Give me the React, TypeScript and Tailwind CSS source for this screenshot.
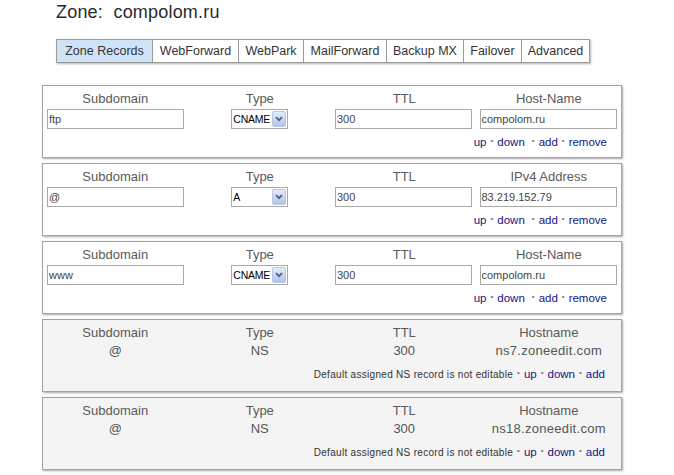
import React from "react";

type EditRow = {
  sub: string;
  type: string;
  ttl: string;
  label: string;
  value: string;
};

type NsRow = {
  host: string;
};

const tabs: { name: string; w: string }[] = [
  { name: "Zone Records", w: "w-[95px]" },
  { name: "WebForward", w: "w-[86px]" },
  { name: "WebPark", w: "w-[65px]" },
  { name: "MailForward", w: "w-[83px]" },
  { name: "Backup MX", w: "w-[77px]" },
  { name: "Failover", w: "w-[58px]" },
  { name: "Advanced", w: "w-[68px]" },
];

const editRows: EditRow[] = [
  { sub: "ftp", type: "CNAME", ttl: "300", label: "Host-Name", value: "compolom.ru" },
  { sub: "@", type: "A", ttl: "300", label: "IPv4 Address", value: "83.219.152.79" },
  { sub: "www", type: "CNAME", ttl: "300", label: "Host-Name", value: "compolom.ru" },
];

const nsRows: NsRow[] = [{ host: "ns7.zoneedit.com" }, { host: "ns18.zoneedit.com" }];

function Dot() {
  return <span className="mx-[4px] text-[#777] text-[8px] relative top-[-1px]">•</span>;
}

function Field({ value }: { value: string }) {
  return (
    <div className="w-[137px] h-[20px] border border-[#a9a9a9] bg-white flex items-center pl-[1px] text-[11px] text-[#444]">
      {value}
    </div>
  );
}

function TypeSelect({ value }: { value: string }) {
  return (
    <div className="w-[57px] h-[20px] border border-[#a9a9a9] bg-white flex items-center">
      <span className="flex-1 pl-[1px] text-[10.5px] tracking-[-0.2px] text-black whitespace-nowrap">{value}</span>
      <span className="w-[14px] h-[16px] mr-[1px] shrink-0 rounded-[2px] border border-[#b7c5e6] bg-gradient-to-b from-[#e4ebfa] to-[#b4c3e6] flex items-center justify-center">
        <svg width="8" height="6" viewBox="0 0 8 6">
          <path d="M1 1.2 L4 4.2 L7 1.2" fill="none" stroke="#4c5f86" strokeWidth="1.8" />
        </svg>
      </span>
    </div>
  );
}

function Header({ label }: { label: string }) {
  return <div className="h-[16px] leading-[16px] text-center text-[13px] text-[#5a5a5a]">{label}</div>;
}

function EditPanel({ row }: { row: EditRow }) {
  return (
    <div className="h-[73px] border border-[#a3a3a3] bg-white shadow-[1px_1px_2px_rgba(0,0,0,0.35)] pt-[5px]">
      <div className="grid grid-cols-4">
        <Header label="Subdomain" />
        <Header label="Type" />
        <Header label="TTL" />
        <Header label={row.label} />
      </div>
      <div className="grid grid-cols-4 mt-[2px]">
        <div className="pl-[4px]">
          <Field value={row.sub} />
        </div>
        <div className="flex justify-center">
          <TypeSelect value={row.type} />
        </div>
        <div className="pl-[3px]">
          <Field value={row.ttl} />
        </div>
        <div className="pl-[3px]">
          <Field value={row.value} />
        </div>
      </div>
      <div className="flex justify-end pr-[14px] mt-[6px] h-[14px] items-center text-[11.5px] text-[#141486]">
        <span>up</span>
        <Dot />
        <span>down</span>
        <span className="w-[3px]" />
        <Dot />
        <span>add</span>
        <Dot />
        <span>remove</span>
      </div>
    </div>
  );
}

function NsPanel({ row }: { row: NsRow }) {
  return (
    <div className="h-[73px] border border-[#a3a3a3] bg-[#f4f4f4] shadow-[1px_1px_2px_rgba(0,0,0,0.35)] pt-[5px]">
      <div className="grid grid-cols-4">
        <Header label="Subdomain" />
        <Header label="Type" />
        <Header label="TTL" />
        <Header label="Hostname" />
      </div>
      <div className="grid grid-cols-4 mt-[2px] text-[13px] text-[#555] text-center leading-[16px]">
        <div>@</div>
        <div>NS</div>
        <div>300</div>
        <div className="tracking-[0.3px]">{row.host}</div>
      </div>
      <div className="flex justify-end pr-[16px] mt-[8px] h-[14px] items-center text-[11.5px] text-[#141486]">
        <span className="text-[10px] text-[#333] tracking-[0.3px]">Default assigned NS record is not editable</span>
        <Dot />
        <span>up</span>
        <Dot />
        <span>down</span>
        <Dot />
        <span>add</span>
      </div>
    </div>
  );
}

export default function App() {
  return (
    <div className="w-[674px] h-[475px] overflow-hidden bg-white font-['Liberation_Sans',Arial,sans-serif]">
      <h1 className="pl-[56px] pt-[1px] h-[22px] leading-[22px] text-[18px] text-[#2a2a2a] tracking-[0.2px]">
        Zone:&nbsp; compolom.ru
      </h1>
      <div className="pl-[56px] mt-[16px]">
        <div className="inline-flex h-[24px] border border-[#9a9a9a] shadow-[1px_1px_2px_rgba(0,0,0,0.3)] bg-white">
          {tabs.map((t, i) => (
            <div
              key={t.name}
              className={
                i === 0
                  ? `${t.w} flex items-center justify-center text-[12.5px] text-[#333] bg-[#cfe3f8]`
                  : `${t.w} flex items-center justify-center text-[12.5px] text-[#333] border-l border-[#9a9a9a]`
              }
            >
              {t.name}
            </div>
          ))}
        </div>
      </div>
      <div className="pl-[42px] w-[622px] mt-[22px] flex flex-col gap-[5px]">
        {editRows.map((r, i) => (
          <EditPanel key={i} row={r} />
        ))}
        {nsRows.map((r, i) => (
          <NsPanel key={i} row={r} />
        ))}
      </div>
    </div>
  );
}
